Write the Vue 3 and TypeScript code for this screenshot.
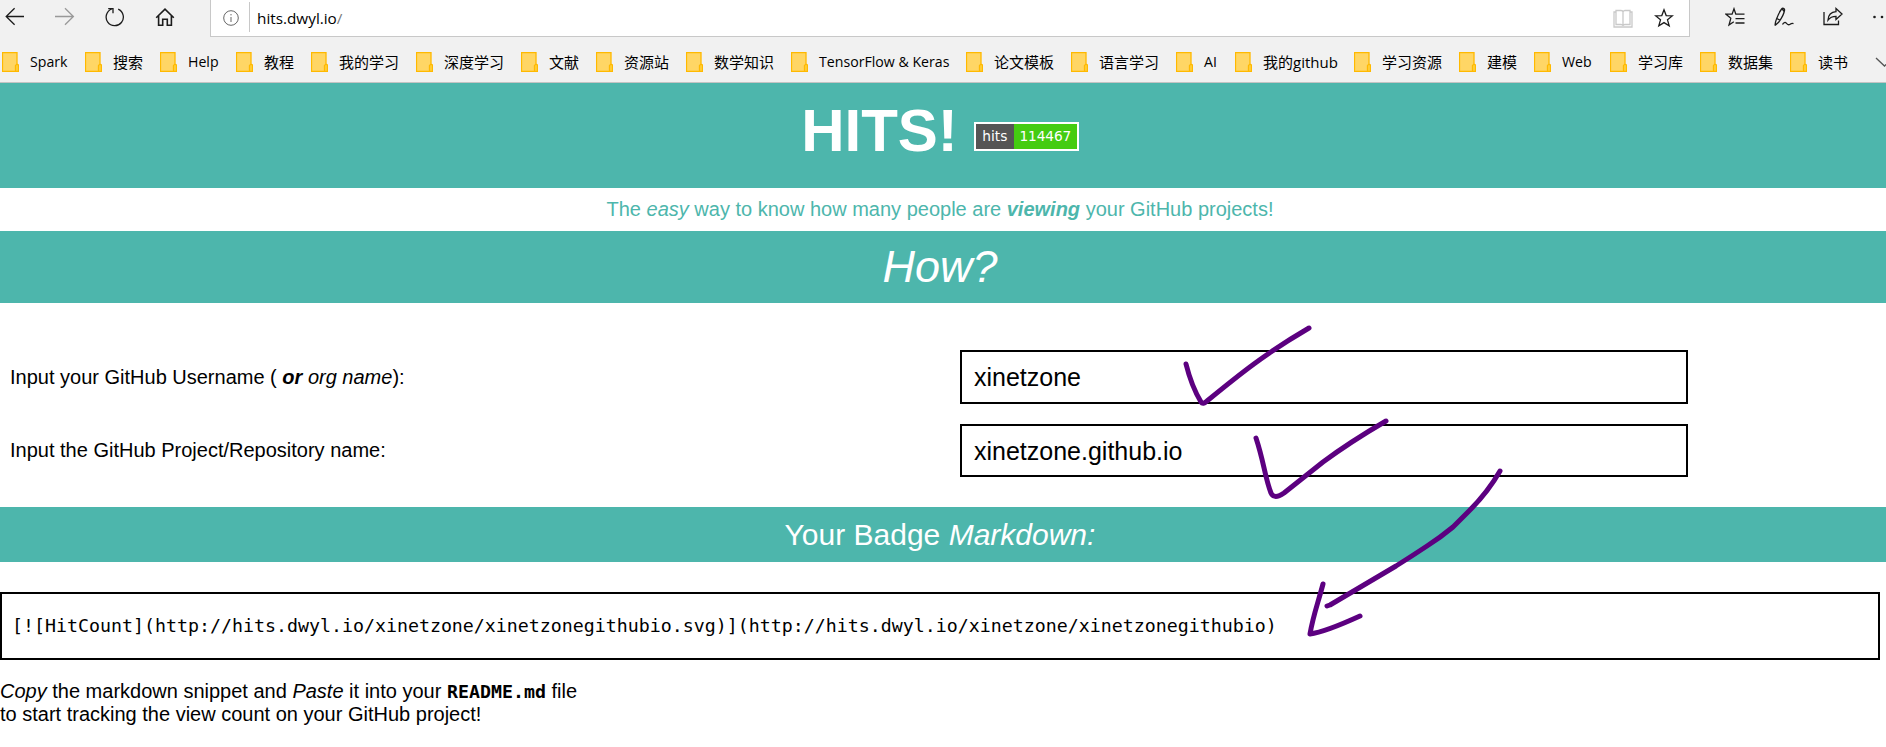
<script setup lang="ts">
interface Bookmark {
  label: string
  width: number
}

const bookmarks: Bookmark[] = [
  { label: 'Spark', width: 83 },
  { label: '搜索', width: 75 },
  { label: 'Help', width: 76 },
  { label: '教程', width: 75 },
  { label: '我的学习', width: 105 },
  { label: '深度学习', width: 105 },
  { label: '文献', width: 75 },
  { label: '资源站', width: 90 },
  { label: '数学知识', width: 105 },
  { label: 'TensorFlow & Keras', width: 175 },
  { label: '论文模板', width: 105 },
  { label: '语言学习', width: 105 },
  { label: 'AI', width: 59 },
  { label: '我的github', width: 119 },
  { label: '学习资源', width: 105 },
  { label: '建模', width: 75 },
  { label: 'Web', width: 76 },
  { label: '学习库', width: 90 },
  { label: '数据集', width: 90 },
  { label: '读书', width: 75 },
]

const isLatin = (label: string): boolean => /^[\w &]+$/.test(label)

const username = 'xinetzone'
const repository = 'xinetzone.github.io'
const base = `http://hits.dwyl.io/${username}/${repository.replace(/\./g, '')}`
const snippet = `[![HitCount](${base}.svg)](${base})`
</script>

<template>
  <div class="window">
    <div class="chrome">
      <div class="toolbar">
        <div class="nav">
          <svg class="icon" width="20" height="20" viewBox="0 0 20 20"><path d="M19 9.500H1.200M9.600 1.200 1.200 9.500l8.400 8.300" /></svg>
          <svg class="icon faded" width="20" height="20" viewBox="0 0 20 20"><path d="M0 9.500h18.300M10 1.200l8.400 8.300-8.400 8.300" /></svg>
          <svg class="icon" width="20" height="20" viewBox="0 0 20 20"><path d="M13.200 2.200A8.600 8.600 0 1 1 6.800 2M3.200 1.600h4.800v4.600" /></svg>
          <svg class="icon home" width="20" height="20" viewBox="0 0 20 20"><path d="M1.200 10.800 10 2.200l8.800 8.600M3.600 8.900v9.400h4.100v-6.100h4.600v6.100h4.100V8.900" /></svg>
        </div>
        <div class="address">
          <svg class="info" width="16" height="16" viewBox="0 0 16 16"><circle cx="8" cy="8" r="7.300" /><path d="M8 7v5M8 4v1.400" /></svg>
          <span class="divider"></span>
          <span class="url">hits.dwyl.io<i>/</i></span>
          <svg class="book" width="20" height="19" viewBox="0 0 20 19"><path d="M3 3H1v15h18V3h-2M3 1.500h5c1 0 2 .8 2 1.500 0-.7 1-1.500 2-1.500h5v14h-5c-1 0-2 .6-2 1.200 0-.6-1-1.200-2-1.200H3zM10 3v14" /></svg>
          <svg class="star" width="20" height="20" viewBox="0 0 20 20"><path d="m10 1.800 2.200 5.800 6.100.3-4.800 3.900 1.700 6.100L10 14.600l-5.200 3.300 1.700-6.100-4.800-3.900 6.100-.3z" /></svg>
        </div>
        <div class="tools">
          <svg class="icon" width="20" height="20" viewBox="0 0 20 20"><path d="M12 7.200h-1.200L9 1.800 7.100 7.200H1l4.800 4.100L4 18l4.800-3.300M12 7.200h7.500M10.500 11.700h9M10.500 16h9" /></svg>
          <svg class="icon" width="20" height="20" viewBox="0 0 20 20"><path d="M1 18.600c.2-2.200.5-4 1.300-6C4 8 6 4 7.600 2c1-1.300 3-.7 3 .8C10.200 6 7 12 4.600 15.300L1 18.600M2.800 11.500l3.200 1.700M8 1.500l2.500 3.500M8.500 17.500c1.200-2.300 2.800-2.600 4-1.200s2 2 3.200 1.200 2-1.600 3.800-.9" /></svg>
          <svg class="icon" width="20" height="20" viewBox="0 0 20 20"><path d="M1 5v12.500h14.500v-4M13 1.500 19 7l-6 5.500V9.300C9 9.300 7 10.300 5 13c.3-4.500 3-8 8-8.300z" /></svg>
          <svg class="icon dots" width="20" height="20" viewBox="0 0 20 20"><circle cx="2.500" cy="10" r="1.300" /><circle cx="10" cy="10" r="1.300" /></svg>
        </div>
      </div>
      <div class="bookmarks">
        <div v-for="b in bookmarks" :key="b.label" class="bookmark" :class="{ latin: isLatin(b.label) }" :style="{ width: b.width + 'px' }">
          <svg width="17" height="20" viewBox="0 0 17 20"><path class="sheet" d="M.5.5h14.500V19.500H.5z" /><path class="tab" d="M13.500 19.500v-6c.7-1.500 3-1.500 3 0v6z" /></svg>
          <span>{{ b.label }}</span>
        </div>
        <svg class="chevron" width="20" height="12" viewBox="0 0 20 12"><path d="m1 1 8.500 8L18 1" /></svg>
      </div>
    </div>

    <header class="band title">
      <h1>HITS!</h1>
      <div class="badge"><span class="key">hits</span><span class="count">114467</span></div>
    </header>
    <p class="tagline">The <em>easy</em> way to know how many people are <em><b>viewing</b></em> your GitHub projects!</p>
    <h2 class="band how"><em>How?</em></h2>

    <main>
      <div class="field first">
        <label>Input your GitHub Username ( <em><b>or</b> org name</em>):</label>
        <div class="input">{{ username }}</div>
      </div>
      <div class="field">
        <label>Input the GitHub Project/Repository name:</label>
        <div class="input">{{ repository }}</div>
      </div>
    </main>

    <h3 class="band result">Your Badge <em>Markdown:</em></h3>
    <pre class="snippet">{{ snippet }}</pre>
    <p class="note">
      <em>Copy</em> the markdown snippet and <em>Paste</em> it into your <code>README.md</code> file<br />
      to start tracking the view count on your GitHub project!
    </p>

    <svg class="ink" width="1886" height="747" viewBox="0 0 1886 747">
      <path d="M1186 364C1190 380 1195 392 1201 402Q1203 405 1207 401C1240 374 1266 353 1309 328" />
      <path d="M1256 438C1264 462 1265 478 1271 493Q1274 500 1284 493L1323 462Q1350 442 1386 421" />
      <path d="M1500 471Q1488 492 1469 511L1453 527Q1441 537 1427 546Q1412 556 1396 566L1330 605L1327 606" />
      <path d="M1323 584C1318 603 1313 616 1310 634Q1325 632 1360 616" />
    </svg>
  </div>
</template>

<style>
body {
  margin: 0;
  background: #fff;
}
</style>

<style scoped>
* {
  box-sizing: border-box;
}
.window {
  position: relative;
  width: 1886px;
  height: 747px;
  overflow: hidden;
  font-family: 'Liberation Sans', Arial, sans-serif;
  font-size: 20px;
  line-height: 23px;
  color: #000;
}
svg {
  display: block;
  flex: none;
  fill: none;
  stroke: #1c1c1c;
  stroke-width: 1.3;
}
h1, h2, h3, p, pre {
  margin: 0;
  font-weight: 400;
}
.chrome {
  height: 83px;
  background: #f1f1f1;
  border-bottom: 1px solid #c4c4c4;
  font-family: 'Open Sans', 'Noto Sans CJK SC', sans-serif;
}
.toolbar {
  display: flex;
  height: 37px;
}
.nav {
  display: flex;
  flex: none;
  gap: 30px;
  width: 210px;
  padding: 7px 0 0 5px;
}
.faded {
  stroke: #999;
}
.home {
  stroke-width: 1.6;
}
.address {
  display: flex;
  flex: none;
  width: 1480px;
  border: solid #c8c8c8;
  border-width: 0 1px 1px;
  background: #fff;
}
.info {
  margin: 10px 10px 0 12px;
  stroke: #666;
  stroke-width: 1;
}
.divider {
  width: 1px;
  height: 30px;
  margin-top: 2px;
  background: #c8c8c8;
}
.url {
  flex: 1;
  margin-left: 7px;
  font-size: 15.3px;
  line-height: 36px;
}
.url i {
  font-style: normal;
  color: #777;
}
.book {
  margin: 9px 21px 0 0;
  stroke: #c9c9c9;
}
.star {
  margin: 8px 15px 0 0;
}
.tools {
  display: flex;
  flex: none;
  gap: 29px;
  padding: 7px 0 0 35px;
}
.dots {
  fill: #1c1c1c;
  stroke: none;
}
.bookmarks {
  display: flex;
  padding: 15px 0 0 2px;
}
.bookmark {
  display: flex;
  flex: none;
  gap: 11px;
  font-size: 15px;
  line-height: 20px;
  white-space: nowrap;
}
.latin {
  font-size: 14.15px;
}
.sheet {
  fill: #ffd665;
  stroke: #ffb900;
}
.tab {
  fill: #ffd03f;
  stroke: #ffb900;
}
.chevron {
  margin: 5px 0 0 10px;
  stroke: #555;
}
.band {
  background: #4db6ac;
  color: #fff;
  text-align: center;
  padding-right: 6px;
}
.title {
  display: flex;
  justify-content: center;
  gap: 16px;
  height: 105px;
}
h1 {
  font-size: 60px;
  line-height: 69px;
  font-weight: 700;
  margin-top: 13px;
}
.badge {
  display: flex;
  width: 105px;
  height: 29px;
  margin-top: 39px;
  border: 2px solid #fff;
  font: 13.75px/25px 'DejaVu Sans', Verdana, sans-serif;
}
.key {
  width: 38px;
  background: #555;
}
.count {
  flex: 1;
  background: #4c1;
  letter-spacing: -0.1px;
}
.tagline {
  height: 43px;
  padding: 10px 6px 0 0;
  text-align: center;
  color: #4db6ac;
}
.how {
  height: 72px;
  font-size: 45px;
  line-height: 71px;
}
main {
  height: 204px;
  padding-top: 47px;
}
.field {
  display: flex;
  height: 53px;
}
.first {
  height: 54px;
  margin-bottom: 20px;
}
label {
  width: 960px;
  padding-left: 10px;
  line-height: 53px;
}
.first label {
  line-height: 55px;
}
.input {
  width: 728px;
  border: 2px solid #000;
  padding-left: 12px;
  font-size: 25px;
  line-height: 50px;
}
.result {
  height: 55px;
  font-size: 30px;
  line-height: 55px;
}
.snippet {
  width: 1880px;
  height: 68px;
  margin-top: 30px;
  border: 2px solid #000;
  padding-left: 10px;
  font: 18.27px/64px 'DejaVu Sans Mono', Consolas, monospace;
}
.note {
  margin-top: 20px;
}
code {
  font: 700 18.27px/20px 'DejaVu Sans Mono', Consolas, monospace;
}
.ink {
  position: absolute;
  left: 0;
  top: 0;
  stroke: #5c0080;
  stroke-width: 5;
  stroke-linecap: round;
  stroke-linejoin: round;
}
</style>
